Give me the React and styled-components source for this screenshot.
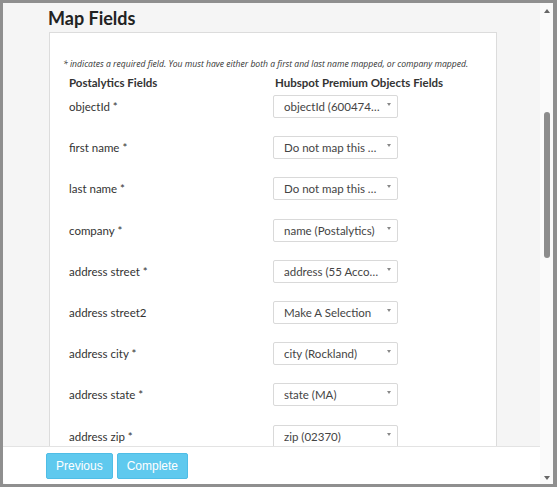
import styled, { createGlobalStyle } from "styled-components";

const Global = createGlobalStyle`
  html, body { margin: 0; padding: 0; background: #ffffff; }
  * { box-sizing: border-box; }
`

const Frame = styled.div`
    width: 557px;
    height: 487px;
    border: 3px solid #8f8f8f;
    border-right-width: 4px;
    background: #f5f5f5;
    display: flex;
    overflow: hidden;
    font-family: Lato, "Open Sans", sans-serif;
    color: #333;
`
const Main = styled.div`
    flex: 1;
    display: flex;
    flex-direction: column;
    min-width: 0;
`
const Scroller = styled.div`
    flex: 1;
    overflow: hidden;
    padding: 0 43px 0 43px;
`
const Title = styled.h2`
    margin: 3px 0 0 2px;
    font-size: 18px;
    font-weight: 700;
    line-height: 24px;
    color: #222;
`
const Card = styled.div`
    margin: 2px 0 0 3px;
    background: #fff;
    border: 1px solid #dcdcdc;
    border-bottom: none;
    padding: 25px 0 0 13px;
    height: 460px;
`
const Note = styled.p`
    margin: 0;
    font-family: "Open Sans", sans-serif;
    font-size: 8.6px;
    font-style: italic;
    line-height: 12px;
    color: #333;
`
const Grid = styled.div`
    display: grid;
    grid-template-columns: 204px 126px;
    padding-left: 6px;
    margin-top: 5px;
`
const Head = styled.div`
    font-size: 11.5px;
    font-weight: 700;
    line-height: 16px;
    white-space: nowrap;
    padding-left: ${p => p.$shift || 0}px;
`
const Label = styled.div`
    font-size: 11.5px;
    line-height: 16px;
    padding-top: 8px;
    height: 41.2px;
`
const Cell = styled.div`
    padding-top: 4px;
    height: 41.2px;
`
const Select = styled.div`
    width: 125px;
    height: 23px;
    border: 1px solid #d9d9d9;
    border-radius: 2px;
    background: #fff;
    display: flex;
    align-items: center;
    padding: 0 6px 0 10px;
    font-size: 11.5px;
    color: #444;
`
const Value = styled.span`
    flex: 1;
    white-space: nowrap;
    overflow: hidden;
    text-overflow: ellipsis;
`
const Caret = styled.span`
    width: 0;
    height: 0;
    border-left: 2.5px solid transparent;
    border-right: 2.5px solid transparent;
    border-top: 3.5px solid #888;
    margin-left: 7px;
    margin-bottom: 4px;
`
const Footer = styled.div`
    height: 38px;
    flex-shrink: 0;
    background: #fff;
    border-top: 1px solid #e3e3e3;
    border-bottom-left-radius: 4px;
    display: flex;
    align-items: flex-start;
    gap: 4px;
    padding: 6px 0 0 43px;
`
const Button = styled.button`
    height: 26px;
    padding: 0 9px;
    background: #5fc9ee;
    border: 1px solid #4fbde6;
    border-radius: 2px;
    color: #fff;
    font-family: "Liberation Sans", Arial, sans-serif;
    font-size: 12px;
`
const Track = styled.div`
    width: 13px;
    background: #fafafa;
    display: flex;
    flex-direction: column;
    align-items: center;
`
const Arrow = styled.span`
    width: 0;
    height: 0;
    border-left: 3px solid transparent;
    border-right: 3px solid transparent;
    ${p => p.$down ? "border-top: 4px solid #666;" : "border-bottom: 4px solid #666;"}
    margin: ${p => p.$down ? "auto 0 4px" : "6px 0 0"};
`
const Thumb = styled.div`
    width: 6px;
    height: 146px;
    margin-top: 99px;
    border-radius: 3px;
    background: #8c8c8c;
`

const rows = [
    ["objectId *", "objectId (600474208532)"],
    ["first name *", "Do not map this field"],
    ["last name *", "Do not map this field"],
    ["company *", "name (Postalytics)"],
    ["address street *", "address (55 Accord Park Dr)"],
    ["address street2", "Make A Selection"],
    ["address city *", "city (Rockland)"],
    ["address state *", "state (MA)"],
    ["address zip *", "zip (02370)"],
]

const App = () => {
    return (
        <Frame>
            <Global />
            <Main>
                <Scroller>
                    <Title>Map Fields</Title>
                    <Card>
                        <Note>* indicates a required field. You must have either both a first and last name mapped, or company mapped.</Note>
                        <Grid>
                            <Head>Postalytics Fields</Head>
                            <Head $shift={2}>Hubspot Premium Objects Fields</Head>
                            {rows.map(([label, value]) => [
                                <Label key={label}>{label}</Label>,
                                <Cell key={label + "-v"}>
                                    <Select>
                                        <Value>{value}</Value>
                                        <Caret />
                                    </Select>
                                </Cell>
                            ])}
                        </Grid>
                    </Card>
                </Scroller>
                <Footer>
                    <Button>Previous</Button>
                    <Button>Complete</Button>
                </Footer>
            </Main>
            <Track>
                <Arrow />
                <Thumb />
                <Arrow $down />
            </Track>
        </Frame>
    )
}

export default App;
